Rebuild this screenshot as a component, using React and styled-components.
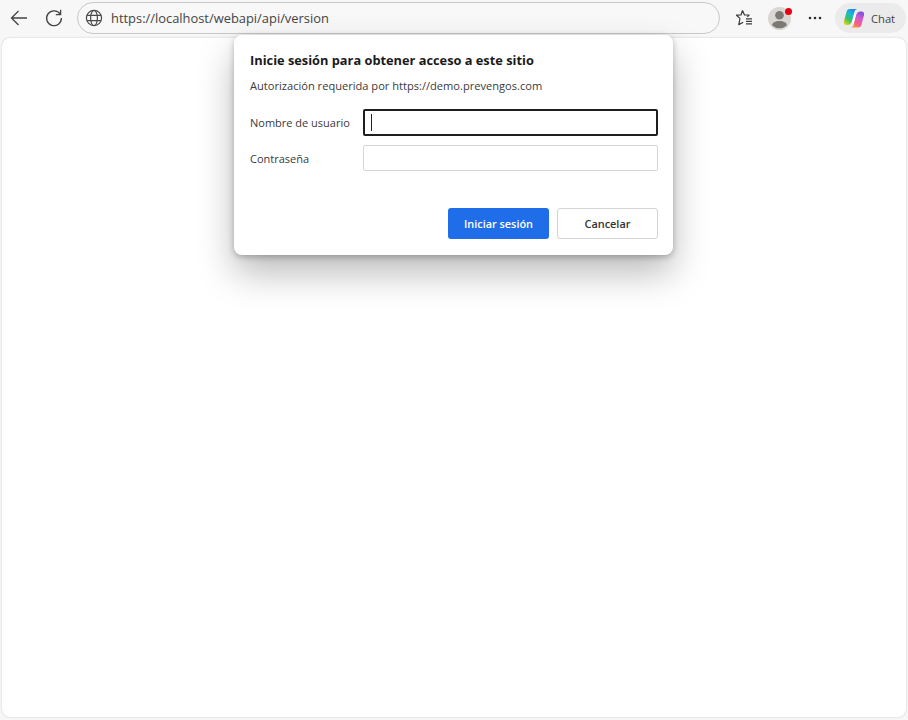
import styled, { createGlobalStyle } from "styled-components";

const Global = createGlobalStyle`
  html, body { margin: 0; padding: 0; height: 100%; background: #f7f7f7; }
  * { box-sizing: border-box; }
`;

const FONT = `"Open Sans", "Noto Sans", "Liberation Sans", sans-serif`;

const Browser = styled.div`
  position: relative;
  width: 908px;
  height: 720px;
  display: flex;
  flex-direction: column;
  background: #f7f7f7;
  font-family: ${FONT};
  overflow: hidden;
`;

const Toolbar = styled.div`
  height: 38px;
  display: flex;
  align-items: center;
  padding: 0 2px 2px 7px;
`;

const NavButton = styled.div`
  width: ${(p) => p.$w || 36}px;
  height: 28px;
  display: flex;
  align-items: center;
  justify-content: center;
  color: #444;
`;

const Address = styled.div`
  width: 643px;
  height: 32px;
  margin-right: 6px;
  padding-left: 7px;
  display: flex;
  align-items: center;
  gap: 8px;
  background: #f8f8f8;
  border: 1px solid #c9c9c9;
  border-radius: 16px;
`;

const Url = styled.span`
  font-size: 12.9px;
  color: #444;
`;

const Avatar = styled.div`
  position: relative;
  width: 23px;
  height: 23px;
  margin: 0 11px 0 6px;
`;

const Badge = styled.span`
  position: absolute;
  top: 1px;
  right: -1px;
  width: 7px;
  height: 7px;
  border-radius: 50%;
  background: #ea0010;
`;

const ChatPill = styled.div`
  width: 71px;
  height: 30px;
  margin-left: 7px;
  display: flex;
  align-items: center;
  gap: 6px;
  padding-left: 8px;
  border-radius: 15px;
  background: #ebebeb;
  font-size: 11.2px;
  color: #444;
`;

const Page = styled.div`
  flex: 1;
  margin: 0 2px 3px 2px;
  background: #fff;
  border-radius: 8px;
  box-shadow: 0 0 2px rgba(0, 0, 0, 0.22);
`;

const Dialog = styled.div`
  position: absolute;
  left: 234px;
  top: 35px;
  width: 439px;
  height: 220px;
  padding: 16px 15px 16px 16px;
  display: flex;
  flex-direction: column;
  background: #fff;
  border-radius: 8px;
  box-shadow: 0 18px 36px rgba(0, 0, 0, 0.27), 0 2px 6px rgba(0, 0, 0, 0.25);
`;

const Title = styled.h1`
  margin: 0;
  height: 18px;
  line-height: 18px;
  font-size: 12.8px;
  font-weight: 700;
  color: #1a1a1a;
`;

const Subtitle = styled.p`
  margin: 8px 0 0;
  height: 17px;
  line-height: 17px;
  font-size: 11.1px;
  color: #3a3a3a;
`;

const Form = styled.div`
  margin-top: 15px;
  display: grid;
  grid-template-columns: 113px 295px;
  grid-template-rows: 27px 26px;
  row-gap: 9px;
  align-items: center;
`;

const Label = styled.label`
  font-size: 11px;
  color: #3a3a3a;
`;

const Field = styled.div`
  height: 100%;
  display: flex;
  align-items: center;
  padding-left: 6px;
  background: #fff;
  border-radius: 2px;
  border: ${(p) => (p.$focused ? "2px solid #1f1f1f" : "1px solid #d6d6d6")};
`;

const Caret = styled.span`
  width: 1px;
  height: 17px;
  background: #222;
`;

const Actions = styled.div`
  margin-top: auto;
  display: flex;
  justify-content: flex-end;
  gap: 8px;
`;

const Button = styled.button`
  width: 101px;
  height: 31px;
  padding: 0;
  border-radius: 3px;
  font-family: ${FONT};
  font-size: 10.9px;
  font-weight: 600;
  border: ${(p) => (p.$primary ? "none" : "1px solid #d4d4d4")};
  background: ${(p) => (p.$primary ? "#1f6de8" : "#fff")};
  color: ${(p) => (p.$primary ? "#fff" : "#333")};
`;

const BackIcon = () => (
  <svg width="20" height="20" viewBox="0 0 20 20" fill="none" stroke="#444" strokeWidth="1.3">
    <path d="M18 10H2.5M9.5 3 2.5 10l7 7" />
  </svg>
);

const ReloadIcon = () => (
  <svg width="20" height="20" viewBox="0 0 20 20" fill="none" stroke="#444" strokeWidth="1.3">
    <path d="M16.2 6.2A7.4 7.4 0 1 0 17.4 10" />
    <path d="M16.6 1.8v4.8h-4.8" />
  </svg>
);

const GlobeIcon = () => (
  <svg width="18" height="18" viewBox="0 0 18 18" fill="none" stroke="#4a4a4a" strokeWidth="1.2">
    <circle cx="9" cy="9" r="7.6" />
    <ellipse cx="9" cy="9" rx="3.4" ry="7.6" />
    <path d="M2 6.4h14M2 11.6h14" />
  </svg>
);

const FavoritesIcon = () => (
  <svg width="20" height="20" viewBox="0 0 20 20" fill="none" stroke="#3c3c3c" strokeWidth="1.2" strokeLinejoin="round">
    <path d="M8.5 2.5 10.5 7h4.6l-1.8 1.8M6 10.4 2.5 7.2l4.5-.2L8.5 2.5M6 10.4 4.8 16.6l4.4-2.4" />
    <path d="M12 10.8h6M12 13.3h6M12 15.8h6" />
  </svg>
);

const AvatarIcon = () => (
  <svg width="23" height="23" viewBox="0 0 23 23">
    <circle cx="11.5" cy="11.5" r="11.5" fill="#d9d6d3" />
    <circle cx="11.5" cy="8.3" r="4.3" fill="#7c7874" />
    <path d="M4.2 18.6c0-3 3-4.6 7.3-4.6s7.3 1.6 7.3 4.6a11 11 0 0 1-14.6 0z" fill="#7c7874" />
  </svg>
);

const MoreIcon = () => (
  <svg width="14" height="4" viewBox="0 0 14 4" fill="#2c2c2c">
    <circle cx="2" cy="2" r="1.3" />
    <circle cx="7" cy="2" r="1.3" />
    <circle cx="12" cy="2" r="1.3" />
  </svg>
);

const CopilotIcon = () => (
  <svg width="22" height="22" viewBox="0 0 22 22">
    <defs>
      <linearGradient id="cpLeft" x1="0.8" y1="0" x2="0.2" y2="1">
        <stop offset="0" stopColor="#1a7fe8" />
        <stop offset="0.35" stopColor="#1fb4d8" />
        <stop offset="0.7" stopColor="#3cc45a" />
        <stop offset="1" stopColor="#e0d020" />
      </linearGradient>
      <linearGradient id="cpRight" x1="0.7" y1="0" x2="0.3" y2="1">
        <stop offset="0" stopColor="#7a50e0" />
        <stop offset="0.4" stopColor="#d85ac8" />
        <stop offset="0.75" stopColor="#f4608a" />
        <stop offset="1" stopColor="#f79a28" />
      </linearGradient>
    </defs>
    <path d="M11.5 4.5 13 8.5 10.5 18 9 14z" fill="#fff" />
    <path d="M6.5 2h8c-1.6 0-2.6 1-3 2.5L9 14c-.6 2-2 4-4.5 4h-1C1.5 18 .4 16.3 1 14.2L3.6 4.6C4 3 5 2 6.5 2z" fill="url(#cpLeft)" />
    <path d="M15.5 20.5h-8c1.6 0 2.6-1 3-2.5L13 8.5c.6-2 2-4 4.5-4h1c2 0 3.1 1.7 2.5 3.8L18.4 18c-.4 1.5-1.4 2.5-2.9 2.5z" fill="url(#cpRight)" />
  </svg>
);

export default function App() {
  return (
    <Browser>
      <Global />
      <Toolbar>
        <NavButton $w={24}><BackIcon /></NavButton>
        <NavButton $w={46}><ReloadIcon /></NavButton>
        <Address>
          <GlobeIcon />
          <Url>https://localhost/webapi/api/version</Url>
        </Address>
        <NavButton $w={36}><FavoritesIcon /></NavButton>
        <Avatar>
          <AvatarIcon />
          <Badge />
        </Avatar>
        <NavButton $w={26}><MoreIcon /></NavButton>
        <ChatPill>
          <CopilotIcon />
          <span>Chat</span>
        </ChatPill>
      </Toolbar>
      <Page />
      <Dialog>
        <Title>Inicie sesión para obtener acceso a este sitio</Title>
        <Subtitle>Autorización requerida por https://demo.prevengos.com</Subtitle>
        <Form>
          <Label>Nombre de usuario</Label>
          <Field $focused><Caret /></Field>
          <Label>Contraseña</Label>
          <Field />
        </Form>
        <Actions>
          <Button $primary>Iniciar sesión</Button>
          <Button>Cancelar</Button>
        </Actions>
      </Dialog>
    </Browser>
  );
}
